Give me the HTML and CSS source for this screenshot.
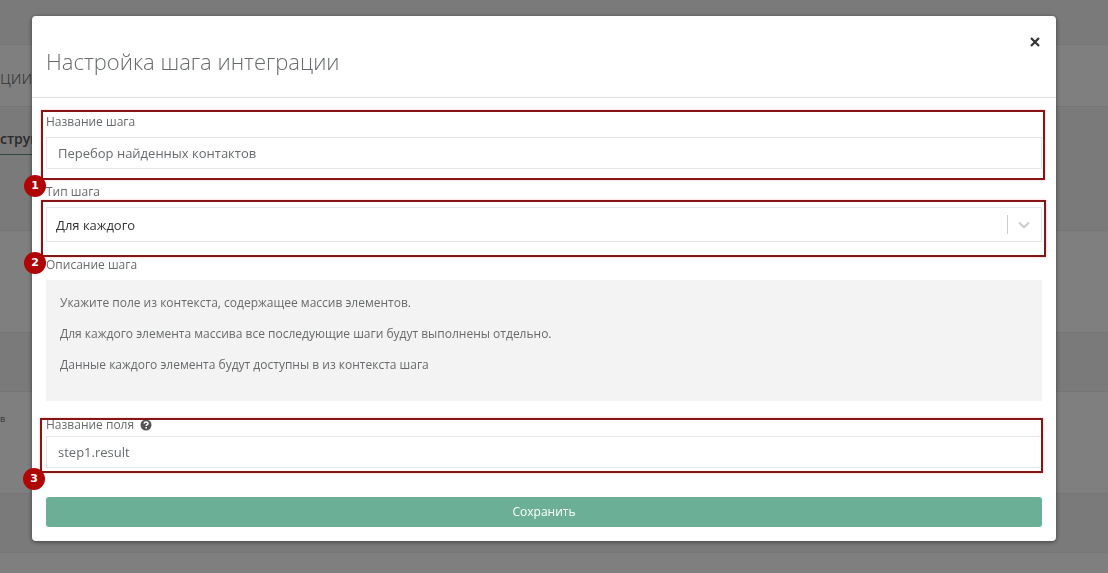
FILE: index.html
```
<!DOCTYPE html>
<html lang="ru">

<head>
  <meta charset="utf-8">
  <title>Настройка шага интеграции</title>
  <link rel="stylesheet" href="styles.css">
</head>

<body>
  <div class="page">
    <div class="topbar"></div>
    <div class="page-heading">ции</div>
    <div class="tabs"><a href="#" class="tab">струк</a></div>
    <div class="panel"></div>
    <div class="spacer"></div>
    <div class="panel">в</div>
    <div class="spacer"></div>
    <div class="panel"></div>
  </div>

  <div class="backdrop">
    <div class="modal" role="dialog" aria-labelledby="modal-title">
      <div class="modal-header">
        <h1 id="modal-title">Настройка шага интеграции</h1>
        <button type="button" class="close-btn" aria-label="Закрыть">
          <svg width="10" height="10" viewBox="0 0 10 10">
            <path d="M1 1L9 9M9 1L1 9" stroke="#333" stroke-width="2.2" fill="none" />
          </svg>
        </button>
      </div>

      <form class="modal-body">
        <div class="form-group">
          <label for="step-name">Название шага</label>
          <input type="text" id="step-name" value="Перебор найденных контактов">
          <div class="mark mark-name"><span class="mark-number">1</span></div>
        </div>

        <div class="form-group">
          <label for="step-type">Тип шага</label>
          <div class="select-box">
            <select id="step-type">
              <option>Для каждого</option>
            </select>
            <span class="select-separator"></span>
            <svg class="select-arrow" width="20" height="20" viewBox="0 0 20 20">
              <path d="M5.5 8L10 12.3L14.5 8" stroke="#ccc" stroke-width="2" fill="none" stroke-linecap="round" stroke-linejoin="round" />
            </svg>
          </div>
          <div class="mark mark-type"><span class="mark-number">2</span></div>
        </div>

        <div class="form-group form-group-description">
          <div class="label">Описание шага</div>
          <div class="description">
            <p>Укажите поле из контекста, содержащее массив элементов.</p>
            <p>Для каждого элемента массива все последующие шаги будут выполнены отдельно.</p>
            <p>Данные каждого элемента будут доступны в из контекста шага</p>
          </div>
        </div>

        <div class="form-group form-group-field">
          <label for="field-name">Название поля
            <svg class="help-icon" width="12" height="12" viewBox="0 0 12 12">
              <circle cx="6" cy="6" r="5.5" fill="#555" />
              <path d="M4.1 4.6C4.2 3.4 5 2.9 6.1 2.9C7.2 2.9 8 3.5 8 4.4C8 5.6 6.2 5.6 6.2 7" stroke="#fff" stroke-width="1.5" fill="none" />
              <path d="M5.4 8H7V9.5H5.4Z" fill="#fff" />
            </svg>
          </label>
          <input type="text" id="field-name" value="step1.result">
          <div class="mark mark-field"><span class="mark-number">3</span></div>
        </div>

        <button type="submit" class="save-btn">Сохранить</button>
      </form>
    </div>
  </div>
</body>

</html>
```
FILE: styles.css
```
* {
  box-sizing: border-box;
}

body {
  margin: 0;
  font-family: "Open Sans", "Noto Sans", sans-serif;
  font-size: 12px;
  line-height: 18px;
  color: #676a6c;
  background-color: #f4f4f4;
}

/* page under the dialog */
.page {
  height: 100vh;
  overflow: hidden;
}

.topbar {
  height: 44px;
}

.page-heading {
  height: 63px;
  padding-top: 20px;
  font-size: 18px;
  line-height: 24px;
  font-weight: 300;
  background-color: #fff;
  border-top: 1px solid #e7eaec;
  border-bottom: 1px solid #e7eaec;
}

.tabs {
  height: 123px;
  padding-top: 21px;
}

.tab {
  display: inline-block;
  height: 27px;
  padding-right: 20px;
  font-size: 14px;
  line-height: 22px;
  font-weight: 600;
  color: #555;
  text-decoration: none;
  border-bottom: 1px solid #5b8f8a;
}

.panel {
  height: 103px;
  padding-top: 18px;
  font-size: 9px;
  background-color: #fff;
  border-top: 1px solid #e7eaec;
  border-bottom: 1px solid #e7eaec;
}

.spacer {
  height: 58px;
}

.backdrop {
  position: fixed;
  inset: 0;
  padding: 16px 52px 32px 32px;
  overflow: hidden;
  background-color: rgba(0, 0, 0, 0.5);
}

.modal {
  background-color: #fff;
  border-radius: 4px;
  box-shadow: 0 1px 4px rgba(0, 0, 0, 0.5);
}

.modal-header {
  display: flex;
  justify-content: space-between;
  align-items: flex-start;
  padding: 16px 14px 21px;
  border-bottom: 1px solid #e2e2e2;
}

h1 {
  margin: 14px 0 0;
  font-size: 22px;
  line-height: 30px;
  font-weight: 300;
}

.close-btn {
  display: flex;
  padding: 5px 2px;
  border: none;
  background: none;
  cursor: pointer;
}

.modal-body {
  padding: 15px 14px 14px;
}

.form-group {
  position: relative;
  margin-bottom: 14px;
}

label,
.label {
  display: flex;
  align-items: center;
  gap: 6px;
  margin-bottom: 6px;
}

input[type="text"] {
  display: block;
  width: 100%;
  height: 32px;
  padding: 0 11px;
  border: 1px solid #e5e6e7;
  font: inherit;
  font-size: 13px;
  color: inherit;
  background-color: #fff;
}

.select-box {
  display: flex;
  align-items: center;
  height: 35px;
  padding-right: 7px;
  border: 1px solid #e5e6e7;
}

select {
  flex: 1;
  height: 100%;
  padding: 0 9px;
  border: none;
  appearance: none;
  font: inherit;
  font-size: 13px;
  color: #333;
  background: none;
}

.select-separator {
  width: 1px;
  height: 19px;
  margin-right: 6px;
  background-color: #ccc;
}

.form-group-description {
  margin-bottom: 15px;
}

.description {
  padding: 14px;
  background-color: #f3f3f3;
}

.description p {
  margin: 0 0 13px;
}

.form-group-field {
  margin-bottom: 29px;
}

.form-group-field label {
  margin-bottom: 2px;
}

.save-btn {
  display: block;
  width: 100%;
  height: 30px;
  border: none;
  border-radius: 3px;
  font: inherit;
  color: #fff;
  background-color: #6bb096;
  cursor: pointer;
}

/* numbered frames over the fields */
.mark {
  position: absolute;
  border: 2px solid #861616;
  box-shadow: 0 0 2px rgba(255, 0, 0, 0.3);
  pointer-events: none;
}

.mark-name {
  inset: -3px -3px -11px -5px;
}

.mark-type {
  inset: 17px -4px -15px -5px;
}

.mark-field {
  inset: 2px -1px -5px -6px;
}

.mark-number {
  position: absolute;
  left: -19px;
  bottom: -19px;
  width: 22px;
  height: 22px;
  border-radius: 50%;
  font-family: "DejaVu Sans", sans-serif;
  font-size: 11px;
  line-height: 22px;
  font-weight: bold;
  text-align: center;
  color: #fff;
  background-color: #b00505;
}
```
